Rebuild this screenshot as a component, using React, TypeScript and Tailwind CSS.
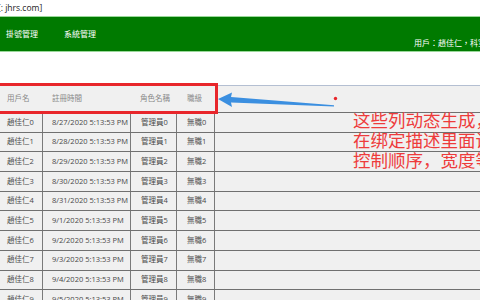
import React from "react";

const rows = [
  { name: "趙佳仁0", date: "8/27/2020 5:13:53 PM", role: "管理員0", rank: "無職0" },
  { name: "趙佳仁1", date: "8/28/2020 5:13:53 PM", role: "管理員1", rank: "無職1" },
  { name: "趙佳仁2", date: "8/29/2020 5:13:53 PM", role: "管理員2", rank: "無職2" },
  { name: "趙佳仁3", date: "8/30/2020 5:13:53 PM", role: "管理員3", rank: "無職3" },
  { name: "趙佳仁4", date: "8/31/2020 5:13:53 PM", role: "管理員4", rank: "無職4" },
  { name: "趙佳仁5", date: "9/1/2020 5:13:53 PM", role: "管理員5", rank: "無職5" },
  { name: "趙佳仁6", date: "9/2/2020 5:13:53 PM", role: "管理員6", rank: "無職6" },
  { name: "趙佳仁7", date: "9/3/2020 5:13:53 PM", role: "管理員7", rank: "無職7" },
  { name: "趙佳仁8", date: "9/4/2020 5:13:53 PM", role: "管理員8", rank: "無職8" },
  { name: "趙佳仁9", date: "9/5/2020 5:13:53 PM", role: "管理員9", rank: "無職9" },
];

const font = { fontFamily: '"Open Sans", "Noto Sans CJK TC", sans-serif' };

const App = () => {
  return (
    <div className="w-[480px] h-[300px] overflow-hidden bg-white relative" style={font}>
      {/* window title remnant */}
      <div className="h-[16px] flex items-center text-[8.5px] text-[#222] -ml-[2px] leading-none">
        [: jhrs.com]
      </div>

      {/* green nav bar */}
      <div className="h-[36px] bg-[#007a00] border-y border-[#9ad89a] flex text-white text-[8px] leading-none">
        <div className="flex items-center gap-[26px] pl-[6px]">
          <span>掛號管理</span>
          <span>系統管理</span>
        </div>
        <div className="ml-auto self-end pb-[4px] -mr-[6px] whitespace-nowrap">
          用戶：趙佳仁，科室
        </div>
      </div>

      <div className="h-[33px]" />

      {/* table area */}
      <div className="bg-[#f0f0f0] border-t border-[#b4bfd2] h-[300px] text-[7.5px] text-[#484848] leading-none">
        <div className="h-[27px] flex items-center text-[#888] border-b border-[#707070]">
          <div className="w-[43px] pl-[7px]">用戶名</div>
          <div className="w-[88px] pl-[9px]">註冊時間</div>
          <div className="w-[46px] pl-[9px]">角色名稱</div>
          <div className="w-[38px] pl-[10px]">職級</div>
        </div>
        {rows.map((r) => (
          <div key={r.name} className="h-[19.7px] flex border-b border-[#707070]">
            <div className="w-[43px] pl-[7px] flex items-center border-r border-[#7a7a7a]">{r.name}</div>
            <div className="w-[88px] pl-[9px] flex items-center border-r border-[#7a7a7a] whitespace-nowrap">{r.date}</div>
            <div className="w-[46px] pl-[10px] flex items-center border-r border-[#7a7a7a]">{r.role}</div>
            <div className="w-[38px] pl-[10px] flex items-center border-r border-[#7a7a7a]">{r.rank}</div>
          </div>
        ))}
      </div>

      {/* annotation overlay */}
      <div className="absolute left-[-4px] top-[83px] w-[222px] h-[31px] border-[3px] border-[#e8262b]" />
      <svg className="absolute left-0 top-0" width="480" height="300">
        <path d="M218 99 L232 92.5 L231 97 L334 105.2 L334 106.4 L231 102.5 L232 107 Z" fill="#3b8fe0" />
        <circle cx="335.5" cy="98.5" r="1.7" fill="#e8262b" />
      </svg>
      <div
        className="absolute left-[353px] top-[110px] text-[17.5px] leading-[20px] text-[#ee3b3b] whitespace-nowrap"
        style={{ fontFamily: '"Noto Sans CJK SC", sans-serif' }}
      >
        <div>这些列动态生成，</div>
        <div>在绑定描述里面设</div>
        <div>控制顺序，宽度等</div>
      </div>
    </div>
  );
};

export default App;
